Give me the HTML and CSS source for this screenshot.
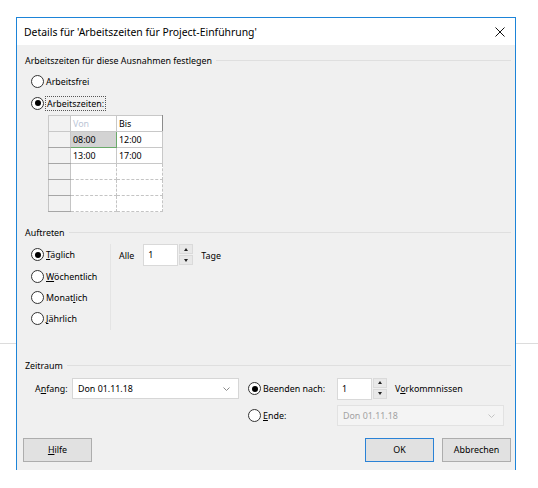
FILE: index.html
```html
<!DOCTYPE html>
<html lang="de">
<head>
    <meta charset="UTF-8">
    <meta name="viewport" content="width=device-width, initial-scale=1.0">
    <title>Details</title>
    <link rel="stylesheet" href="styles.css">
</head>
<body>
<div class="backdrop-line"></div>

<div class="dialog">
    <div class="titlebar">
        <span class="title">Details für 'Arbeitszeiten für Project-Einführung'</span>
        <svg class="close" width="10" height="10" viewBox="0 0 10 10">
            <path d="M0.5 0.5 L9.5 9.5 M9.5 0.5 L0.5 9.5" stroke="#111" stroke-width="1" fill="none"/>
        </svg>
    </div>

    <div class="dialog-body">
        <!-- Arbeitszeiten -->
        <div class="group-head"><span>Arbeitszeiten für diese Ausnahmen festlegen</span></div>
        <div class="radio"><span class="circle"></span><span>Arbeitsfrei</span></div>
        <div class="radio"><span class="circle checked"></span><span class="focus">Arbeitszeiten:</span></div>

        <table class="hours">
            <tr class="head"><td class="rh"></td><td class="muted">Von</td><td>Bis</td></tr>
            <tr><td class="rh"></td><td class="selected">08:00</td><td>12:00</td></tr>
            <tr><td class="rh"></td><td>13:00</td><td>17:00</td></tr>
            <tr class="empty"><td class="rh"></td><td></td><td></td></tr>
            <tr class="empty"><td class="rh"></td><td></td><td></td></tr>
            <tr class="empty"><td class="rh"></td><td></td><td></td></tr>
        </table>

        <!-- Auftreten -->
        <div class="group-head group-gap"><span>Auftreten</span></div>
        <div class="recur">
            <div class="recur-types">
                <div class="radio"><span class="circle checked"></span><span><u>T</u>äglich</span></div>
                <div class="radio"><span class="circle"></span><span><u>W</u>öchentlich</span></div>
                <div class="radio"><span class="circle"></span><span>Monat<u>l</u>ich</span></div>
                <div class="radio"><span class="circle"></span><span><u>J</u>ährlich</span></div>
            </div>
            <div class="recur-detail">
                <span>Alle</span>
                <div class="spinner">
                    <div class="spin-input">1</div>
                    <div class="spin-buttons">
                        <div class="spin-btn"><span class="arrow-up"></span></div>
                        <div class="spin-btn"><span class="arrow-down"></span></div>
                    </div>
                </div>
                <span class="unit">Tage</span>
            </div>
        </div>

        <!-- Zeitraum -->
        <div class="group-head range-gap"><span>Zeitraum</span></div>
        <div class="range">
            <span class="range-label">A<u>n</u>fang:</span>
            <div class="combo">
                <span>Don 01.11.18</span>
                <svg class="chevron" width="7" height="4" viewBox="0 0 7 4"><path d="M0.5 0.5 L3.5 3.5 L6.5 0.5" stroke="#8a8a8a" fill="none"/></svg>
            </div>
            <div class="radio range-radio"><span class="circle checked"></span><span>Beenden nach:</span></div>
            <div class="range-end">
                <div class="spinner">
                    <div class="spin-input">1</div>
                    <div class="spin-buttons">
                        <div class="spin-btn"><span class="arrow-up"></span></div>
                        <div class="spin-btn"><span class="arrow-down"></span></div>
                    </div>
                </div>
                <span class="unit">V<u>o</u>rkommnissen</span>
            </div>

            <div class="radio range-radio second"><span class="circle"></span><span><u>E</u>nde:</span></div>
            <div class="combo disabled">
                <span>Don 01.11.18</span>
                <svg class="chevron" width="7" height="4" viewBox="0 0 7 4"><path d="M0.5 0.5 L3.5 3.5 L6.5 0.5" stroke="#c4c4c4" fill="none"/></svg>
            </div>
        </div>

        <div class="buttons">
            <button class="btn"><u>H</u>ilfe</button>
            <span class="spacer"></span>
            <button class="btn btn-default">OK</button>
            <button class="btn">Abbrechen</button>
        </div>
    </div>
</div>
</body>
</html>
```

FILE: styles.css
```css
body {
    margin: 0;
    background-color: #fff;
    font-family: "Noto Sans", "Liberation Sans", sans-serif;
    font-size: 8.9px;
    color: #000;
}

.backdrop-line {
    position: absolute;
    top: 343px;
    left: 0;
    right: 0;
    height: 1px;
    background-color: #dcdcdc;
}

.dialog {
    position: relative;
    z-index: 1;
    width: 500px;
    box-sizing: border-box;
    margin: 17px 0 0 16px;
    border: 1px solid #1d84d8;
    border-bottom: none;
}

.titlebar {
    height: 27px;
    background-color: #fff;
    display: flex;
    align-items: center;
    padding-left: 7px;
}

.title {
    font-size: 10.4px;
}

.close {
    margin-left: auto;
    margin-right: 10px;
}

.dialog-body {
    background-color: #f0f0f0;
    padding: 8px 4px 8px 7px;
}

.group-head {
    display: flex;
    align-items: center;
    height: 14px;
    padding-left: 1px;
}

.group-head::after {
    content: "";
    flex: 1;
    height: 1px;
    margin-left: 4px;
    background-color: #dfdfdf;
}

.group-gap {
    margin-top: 13px;
}

.range-gap {
    margin-top: 29px;
}

.radio {
    display: flex;
    align-items: center;
    height: 22px;
    padding-left: 7px;
}

.group-head + .radio {
    margin-top: 3px;
}

.circle {
    width: 11px;
    height: 11px;
    border: 1px solid #333;
    border-radius: 50%;
    background-color: #fff;
    margin-right: 2px;
    display: flex;
    align-items: center;
    justify-content: center;
    flex-shrink: 0;
}

.circle.checked::after {
    content: "";
    width: 6px;
    height: 6px;
    border-radius: 50%;
    background-color: #000;
}

.focus {
    outline: 1px dotted #555;
    outline-offset: 0;
    padding: 0 1px;
}

/* hours grid */
.hours {
    border-collapse: collapse;
    table-layout: fixed;
    width: 115px;
    margin: 1px 0 0 24px;
}

.hours td {
    height: 15px;
    padding: 0 0 0 2px;
    border: 1px solid #c8c8c8;
    background-color: #fff;
    line-height: 14px;
    white-space: nowrap;
}

.hours .head td {
    height: 15px;
}

.hours .head td:last-child {
    border-right-color: #8c8c8c;
}

.hours td.rh {
    width: 19px;
    background-color: #f2f2f2;
    border-bottom: 1px solid #a6a6a6;
}

.hours .head td.rh {
    border-bottom-color: #c8c8c8;
}

.hours .muted {
    color: #bcc6d6;
}

.hours td.selected {
    background-color: #d3d3d3;
    border: 1px solid #6aaa6a;
}

.hours .empty td {
    border-style: dashed;
    border-color: #c4c4c4;
}

.hours .empty td.rh {
    border-style: solid;
    border-bottom-color: #a6a6a6;
}

/* Auftreten */
.recur {
    display: flex;
    margin-top: 5px;
}

.recur-types {
    width: 86px;
    border-right: 1px solid #e4e4e4;
}

.recur-types .radio {
    height: 21.4px;
}

.recur-detail {
    display: flex;
    align-items: center;
    height: 22px;
    padding-left: 8px;
}

.spinner {
    display: flex;
    margin-left: 9px;
}

.spin-input {
    width: 29px;
    height: 20px;
    padding-left: 4px;
    line-height: 20px;
    background-color: #fff;
    border: 1px solid #d9d9d9;
}

.spin-buttons {
    display: flex;
    flex-direction: column;
    gap: 1px;
    margin-left: 1px;
}

.spin-btn {
    width: 14px;
    height: 10px;
    background-color: #e8e8e8;
    border: 1px solid #dadada;
    box-sizing: border-box;
    display: flex;
    align-items: center;
    justify-content: center;
}

.arrow-up {
    border-left: 2.5px solid transparent;
    border-right: 2.5px solid transparent;
    border-bottom: 3px solid #222;
}

.arrow-down {
    border-left: 2.5px solid transparent;
    border-right: 2.5px solid transparent;
    border-top: 3px solid #222;
}

.unit {
    margin-left: 8px;
}

/* Zeitraum */
.range {
    display: grid;
    grid-template-columns: 37px 167px 98px auto;
    grid-template-rows: 22px 22px;
    row-gap: 5px;
    align-items: center;
    margin-top: 5px;
    padding-left: 11px;
}

.combo {
    height: 19px;
    display: flex;
    align-items: center;
    padding: 0 8px 0 5px;
    background-color: #fff;
    border: 1px solid #d6d6d6;
}

.combo .chevron {
    margin-left: auto;
}

.combo.disabled {
    width: 152px;
    color: #a2a2a2;
    background-color: #f4f4f4;
    border-color: #e2e2e2;
}

.range-radio {
    padding-left: 9px;
    height: 22px;
}

.range-radio.second {
    grid-column: 3;
}

.range-end {
    display: flex;
    align-items: center;
}

.range-end .spinner {
    margin-left: 0;
}

/* buttons */
.buttons {
    display: flex;
    margin-top: 11px;
}

.spacer {
    flex: 1;
}

.btn {
    width: 69px;
    height: 24px;
    margin-left: 8px;
    font-family: inherit;
    font-size: 8.9px;
    color: #000;
    background-color: #e1e1e1;
    border: 1px solid #adadad;
    padding: 0;
}

.btn:first-child {
    margin-left: -1px;
}

.btn-default {
    border-color: #2a82d6;
}
```
